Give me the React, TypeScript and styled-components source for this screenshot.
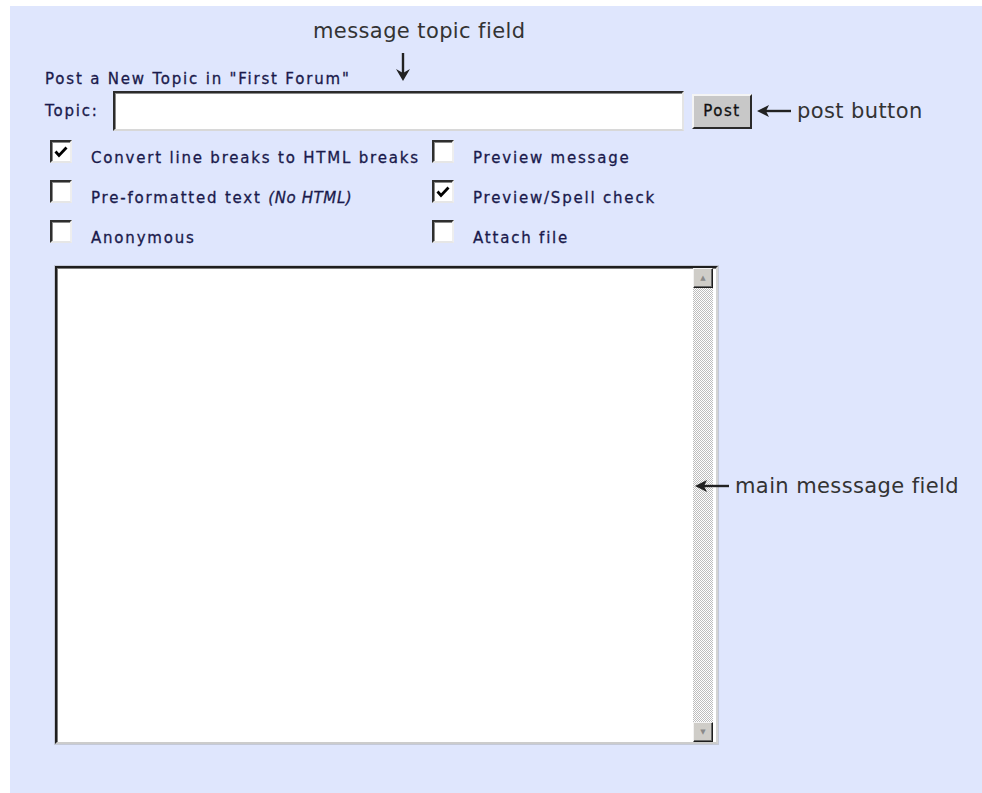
import styled, { createGlobalStyle } from "styled-components";

const GlobalStyle = createGlobalStyle`
  html, body {
    margin: 0;
    padding: 0;
    background: #ffffff;
  }
  body {
    font-family: "DejaVu Sans", Verdana, sans-serif;
  }
`;

const Panel = styled.main`
  box-sizing: border-box;
  width: 972px;
  height: 787px;
  margin: 6px 0 0 10px;
  padding: 13px 0 0 35px;
  background: #dfe6fd;
  display: flex;
  flex-direction: column;
`;

const Note = styled.span`
  font-family: "DejaVu Sans", Verdana, sans-serif;
  font-size: 21px;
  line-height: 24px;
  letter-spacing: 0.4px;
  color: #333333;
  white-space: nowrap;
`;

const TopNote = styled(Note)`
  padding-left: 268px;
`;

const FormText = styled.span`
  font-family: "DejaVu Sans", Verdana, sans-serif;
  font-size: 15px;
  letter-spacing: 1.8px;
  line-height: 18px;
  color: #1a1a4c;
  white-space: nowrap;
  -webkit-text-stroke: 0.3px #1a1a4c;

  em {
    font-style: italic;
    letter-spacing: 0.6px;
  }
`;

const HeadingRow = styled.div`
  display: flex;
  align-items: flex-start;
  margin-top: 10px;
`;

const Heading = styled(FormText)`
  margin-top: 17px;
`;

const DownArrow = styled.svg`
  flex: none;
  margin-left: 44px;
`;

const TopicRow = styled.div`
  display: flex;
  align-items: center;
  margin-top: 3px;
`;

const TopicLabel = styled(FormText)`
  width: 68px;
`;

const TopicInput = styled.input`
  box-sizing: border-box;
  width: 571px;
  height: 40px;
  margin: 0;
  border: 2px solid;
  border-color: #2b2b2b #e4e4e4 #d8d8d8 #2b2b2b;
  box-shadow: inset 1px 1px 0 #8a8a8a;
  background: #ffffff;
  outline: none;
`;

const PostButton = styled.button`
  box-sizing: border-box;
  width: 60px;
  height: 35px;
  margin-left: 8px;
  padding: 0;
  border: 2px solid;
  border-color: #f4f4f4 #2a2a2a #2a2a2a #f4f4f4;
  background: #c8c8c8;
  font-family: "DejaVu Sans", Verdana, sans-serif;
  font-size: 15px;
  letter-spacing: 1.5px;
  color: #111111;
  -webkit-text-stroke: 0.3px #111111;
`;

const LeftArrow = styled.svg<{ $gap: number }>`
  flex: none;
  margin-left: ${(p) => p.$gap}px;
`;

const ArrowNote = styled(Note)`
  margin-left: 6px;
`;

const Options = styled.div`
  display: grid;
  grid-template-columns: 382px auto;
  grid-auto-rows: 40px;
  margin: 9px 0 0 5px;
`;

const Option = styled.label`
  display: flex;
  align-items: flex-start;
`;

const Box = styled.span`
  box-sizing: border-box;
  flex: none;
  width: 22px;
  height: 23px;
  border: 2px solid;
  border-color: #2e2e2e #eeeeee #e6e6e6 #2e2e2e;
  box-shadow: inset 1px 1px 0 #8c8c8c;
  background: #ffffff;
  display: flex;
  align-items: center;
  justify-content: center;
`;

const OptionText = styled(FormText)`
  margin-left: 19px;
  padding-top: 9px;
`;

const MessageRow = styled.div`
  display: flex;
  align-items: center;
  margin: 6px 0 0 10px;
`;

const MessageBox = styled.div`
  box-sizing: border-box;
  flex: none;
  width: 663px;
  height: 478px;
  display: flex;
  border: 2px solid;
  border-color: #1e1e1e #d4d4d4 #cccccc #1e1e1e;
  box-shadow: inset 1px 1px 0 #7c7c7c, 0 0 0 1px #c4c9d8;
  background: #ffffff;
`;

const MessageText = styled.textarea`
  flex: 1;
  margin: 0;
  padding: 4px;
  border: none;
  outline: none;
  resize: none;
  background: transparent;
  font-family: "DejaVu Sans", Verdana, sans-serif;
  font-size: 13px;
`;

const ScrollBar = styled.div`
  flex: none;
  width: 20px;
  margin-right: 3px;
  display: flex;
  flex-direction: column;
`;

const ScrollButton = styled.span`
  box-sizing: border-box;
  height: 20px;
  border: 1px solid;
  border-color: #f2f2f2 #1e1e1e #1e1e1e #f2f2f2;
  box-shadow: inset -1px -1px 0 #6a6a6a;
  background: #cfcdc8;
  display: flex;
  align-items: center;
  justify-content: center;
  font-size: 7px;
  color: #8a8a8a;
`;

const Track = styled.span`
  flex: 1;
  background-color: #ffffff;
  background-image: repeating-conic-gradient(#bdbdbd 0% 25%, #ffffff 0% 50%);
  background-size: 2px 2px;
`;

const MainNote = styled.div`
  display: flex;
  align-items: center;
  margin: 0 0 38px -23px;
`;

function Check() {
  return (
    <svg width="14" height="12" viewBox="0 0 14 12">
      <path d="M1.5 5.5 L5 9.5 L12.5 1.5" fill="none" stroke="#000" strokeWidth="2.8" />
    </svg>
  );
}

function Arrow({ gap }: { gap: number }) {
  return (
    <LeftArrow $gap={gap} width="34" height="14" viewBox="0 0 34 14">
      <line x1="9" y1="7" x2="34" y2="7" stroke="#222" strokeWidth="2.4" />
      <polygon points="0,7 12,1 9,7 12,13" fill="#222" />
    </LeftArrow>
  );
}

interface OptionProps {
  checked?: boolean;
  children: React.ReactNode;
}

function CheckOption({ checked, children }: OptionProps) {
  return (
    <Option>
      <Box>{checked && <Check />}</Box>
      <OptionText>{children}</OptionText>
    </Option>
  );
}

export default function App() {
  return (
    <>
      <GlobalStyle />
      <Panel>
        <TopNote>message topic field</TopNote>
        <HeadingRow>
          <Heading>Post a New Topic in "First Forum"</Heading>
          <DownArrow width="16" height="28" viewBox="0 0 16 28">
            <line x1="8" y1="0" x2="8" y2="20" stroke="#222" strokeWidth="2.4" />
            <polygon points="8,28 1,16 8,20 15,16" fill="#222" />
          </DownArrow>
        </HeadingRow>
        <TopicRow>
          <TopicLabel>Topic:</TopicLabel>
          <TopicInput type="text" />
          <PostButton>Post</PostButton>
          <Arrow gap={5} />
          <ArrowNote>post button</ArrowNote>
        </TopicRow>
        <Options>
          <CheckOption checked>Convert line breaks to HTML breaks</CheckOption>
          <CheckOption>Preview message</CheckOption>
          <CheckOption>
            Pre-formatted text <em>(No HTML)</em>
          </CheckOption>
          <CheckOption checked>Preview/Spell check</CheckOption>
          <CheckOption>Anonymous</CheckOption>
          <CheckOption>Attach file</CheckOption>
        </Options>
        <MessageRow>
          <MessageBox>
            <MessageText />
            <ScrollBar>
              <ScrollButton>▲</ScrollButton>
              <Track />
              <ScrollButton>▼</ScrollButton>
            </ScrollBar>
          </MessageBox>
          <MainNote>
            <Arrow gap={0} />
            <ArrowNote>main messsage field</ArrowNote>
          </MainNote>
        </MessageRow>
      </Panel>
    </>
  );
}
